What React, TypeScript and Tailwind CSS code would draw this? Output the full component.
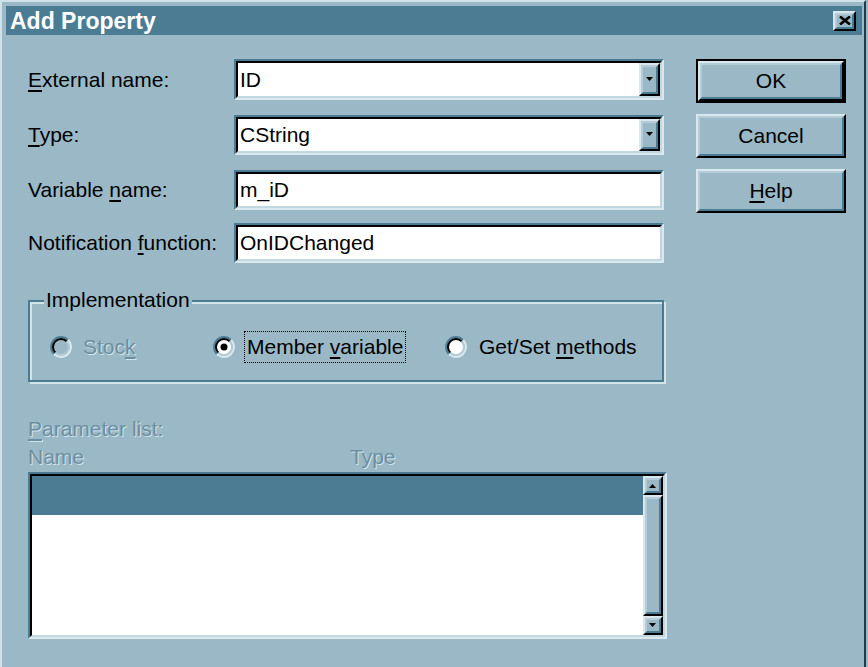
import React from 'react';

type P = { className?: string; innerClassName?: string; children?: React.ReactNode };

function U({ children }: { children: React.ReactNode }) {
  return <span className="underline decoration-[2px] underline-offset-[3px]">{children}</span>;
}

function Sunken({ className = '', innerClassName = '', children }: P) {
  return (
    <div className={`border-2 border-t-[#4b7b93] border-l-[#4b7b93] border-b-[#dbe9ee] border-r-[#dbe9ee] ${className}`}>
      <div className={`h-full border-2 border-t-black border-l-black border-b-[#c2d8e1] border-r-[#c2d8e1] bg-white ${innerClassName}`}>
        {children}
      </div>
    </div>
  );
}

function Raised({ className = '', innerClassName = '', children }: P) {
  return (
    <div className={`border-2 border-t-[#d8e8ee] border-l-[#d8e8ee] border-b-black border-r-black ${className}`}>
      <div className={`h-full border-2 border-t-[#b3ccd7] border-l-[#b3ccd7] border-b-[#4b7b93] border-r-[#4b7b93] bg-[#9ab8c5] ${innerClassName}`}>
        {children}
      </div>
    </div>
  );
}

function DownArrow() {
  return (
    <svg width="8" height="6" viewBox="0 0 8 6">
      <polygon points="0,0 7,0 3.5,4" fill="black" />
    </svg>
  );
}

function UpArrow() {
  return (
    <svg width="8" height="6" viewBox="0 0 8 6">
      <polygon points="0,5 7,5 3.5,1" fill="black" />
    </svg>
  );
}

function Radio({ checked = false, disabled = false }: { checked?: boolean; disabled?: boolean }) {
  return (
    <svg width="22" height="22" viewBox="0 0 22 22" className="shrink-0">
      <circle cx="11" cy="11" r="7.5" fill={disabled ? '#9ab8c5' : 'white'} />
      <path d="M3.93 18.07 A10 10 0 0 1 18.07 3.93" stroke="#4b7b93" strokeWidth="2" fill="none" />
      <path d="M18.07 3.93 A10 10 0 0 1 3.93 18.07" stroke="#dbe9ee" strokeWidth="2" fill="none" />
      <path d="M5.34 16.66 A8 8 0 0 1 16.66 5.34" stroke="black" strokeWidth="2" fill="none" />
      <path d="M16.66 5.34 A8 8 0 0 1 5.34 16.66" stroke="#b3ccd7" strokeWidth="2" fill="none" />
      {checked && <circle cx="11" cy="11" r="3.5" fill="black" />}
    </svg>
  );
}

function Button({ children, isDefault = false }: { children: React.ReactNode; isDefault?: boolean }) {
  if (isDefault) {
    return (
      <div className="h-[44px] border-2 border-black">
        <Raised className="h-full" innerClassName="flex items-center justify-center">
          <span className="text-[21px] leading-[24px] text-black">{children}</span>
        </Raised>
      </div>
    );
  }
  return (
    <Raised className="h-[44px]" innerClassName="flex items-center justify-center">
      <span className="text-[21px] leading-[24px] text-black">{children}</span>
    </Raised>
  );
}

function Field({ label, value, combo = false, className = '' }: { label: React.ReactNode; value: string; combo?: boolean; className?: string }) {
  return (
    <div className={`flex items-center ${className}`}>
      <div className="w-[206px] text-[21px] leading-[24px] text-black">{label}</div>
      <Sunken className="w-[430px] h-full" innerClassName="flex items-stretch">
        <div className="flex-1 flex items-center pl-[2px] text-[21px] leading-[24px] text-black">{value}</div>
        {combo && (
          <Raised className="w-[21px]" innerClassName="flex items-center justify-center">
            <DownArrow />
          </Raised>
        )}
      </Sunken>
    </div>
  );
}

const disabled = 'text-[#6b8fa2] [text-shadow:1px_1px_0_#d3e4eb]';

export default function App() {
  return (
    <div className="w-[868px] h-[667px] overflow-hidden bg-[#9ab8c5] font-['Liberation_Sans',Arial,sans-serif]">
      <div className="h-[667px] mr-[2px] border-t-2 border-l-2 border-t-[#cfe2ea] border-l-[#cfe2ea] border-r-2 border-r-[#22394a] pt-[4px] pl-[4px] pr-[2px]">
        {/* Title bar */}
        <div className="h-[29px] bg-[#4b7c94] flex items-center justify-between pl-[4px] pr-[6px]">
          <span className="text-white font-bold text-[23px] leading-[26px]">Add Property</span>
          <Raised className="w-[23px] h-[20px]" innerClassName="flex items-center justify-center">
            <svg width="12" height="9" viewBox="0 0 12 9">
              <path d="M1 0.5 L11 8.5 M11 0.5 L1 8.5" stroke="black" strokeWidth="2.6" />
            </svg>
          </Raised>
        </div>

        {/* Body */}
        <div className="flex pl-[22px]">
          <div className="w-[639px] flex flex-col">
            <Field className="mt-[24px] h-[41px]" label={<><U>E</U>xternal name:</>} value="ID" combo />
            <Field className="mt-[15px] h-[40px]" label={<><U>T</U>ype:</>} value="CString" combo />
            <Field className="mt-[15px] h-[40px]" label={<>Variable <U>n</U>ame:</>} value="m_iD" />
            <Field className="mt-[13px] h-[40px]" label={<>Notification <U>f</U>unction:</>} value="OnIDChanged" />

            {/* Implementation group */}
            <div className="relative mt-[37px] w-[636px] h-[82px] border-2 border-[#4b7b93] shadow-[inset_2px_2px_0_#d3e4eb,2px_2px_0_#d3e4eb]">
              <div className="absolute left-[14px] top-[-14px] bg-[#9ab8c5] px-[2px] text-[21px] leading-[24px] text-black">Implementation</div>
              <div className="flex items-center h-[26px] mt-[32px] pl-[20px]">
                <div className="w-[163px] flex items-center gap-[11px]">
                  <Radio disabled />
                  <span className={`text-[21px] leading-[24px] ${disabled}`}>Stoc<U>k</U></span>
                </div>
                <div className="w-[232px] flex items-center gap-[9px]">
                  <Radio checked />
                  <span className="border border-dotted border-black px-[2px] py-[3px] text-[21px] leading-[24px] text-black">Member <U>v</U>ariable</span>
                </div>
                <div className="flex items-center gap-[12px]">
                  <Radio />
                  <span className="text-[21px] leading-[24px] text-black">Get/Set <U>m</U>ethods</span>
                </div>
              </div>
            </div>

            {/* Parameter list */}
            <div className={`mt-[35px] text-[21px] leading-[24px] ${disabled}`}><U>P</U>arameter list:</div>
            <div className={`mt-[4px] flex text-[21px] leading-[24px] ${disabled}`}>
              <span className="w-[322px]">Name</span>
              <span>Type</span>
            </div>
            <Sunken className="mt-[3px] w-[639px] h-[167px]" innerClassName="flex">
              <div className="flex-1 flex flex-col">
                <div className="h-[39px] bg-[#4b7c94]" />
              </div>
              <div className="w-[20px] flex flex-col bg-[#9ab8c5]">
                <Raised className="h-[19px]" innerClassName="flex items-center justify-center">
                  <UpArrow />
                </Raised>
                <Raised className="flex-1" />
                <Raised className="h-[19px]" innerClassName="flex items-center justify-center">
                  <DownArrow />
                </Raised>
              </div>
            </Sunken>
          </div>

          {/* Buttons */}
          <div className="ml-[29px] mt-[24px] w-[150px] flex flex-col gap-[11px]">
            <Button isDefault>OK</Button>
            <Button>Cancel</Button>
            <Button><U>H</U>elp</Button>
          </div>
        </div>
      </div>
    </div>
  );
}
